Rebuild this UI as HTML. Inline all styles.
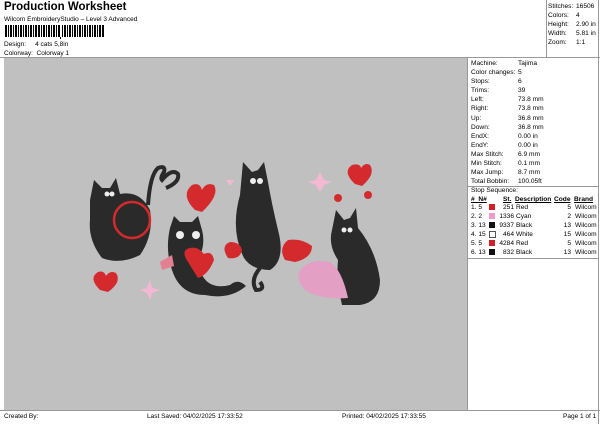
<!DOCTYPE html>
<html><head><style>
body{margin:0;width:600px;height:424px;background:#fff;font-family:"Liberation Sans",sans-serif;font-size:7px;color:#000;position:relative;overflow:hidden}
.a{position:absolute;white-space:nowrap}
.r{position:absolute;font-size:6.6px;line-height:9.1px;white-space:nowrap}
</style></head><body>
<div class="a" style="left:4px;top:1px;font-size:11.5px;font-weight:bold">Production Worksheet</div>
<div class="a" style="left:4px;top:16px;font-size:6.5px">Wilcom EmbroideryStudio – Level 3 Advanced</div>
<svg class="a" style="left:5px;top:25px" width="100" height="14">
<g fill="#000">
<rect x="0" y="0" width="2" height="12"/><rect x="3" y="0" width="1" height="12"/><rect x="5" y="0" width="2" height="12"/><rect x="8" y="0" width="1" height="12"/><rect x="10" y="0" width="2" height="12"/><rect x="13" y="0" width="1" height="12"/><rect x="15" y="0" width="2" height="12"/><rect x="18" y="0" width="1" height="12"/><rect x="20" y="0" width="2" height="12"/><rect x="23" y="0" width="1" height="12"/><rect x="25" y="0" width="2" height="12"/><rect x="28" y="0" width="1" height="12"/><rect x="30" y="0" width="2" height="12"/><rect x="33" y="0" width="2" height="12"/><rect x="36" y="0" width="1" height="12"/><rect x="38" y="0" width="2" height="12"/><rect x="41" y="0" width="1" height="12"/><rect x="43" y="0" width="2" height="12"/><rect x="46" y="0" width="1" height="12"/><rect x="48" y="0" width="2" height="12"/><rect x="51" y="0" width="1" height="12"/><rect x="53" y="0" width="2" height="12"/><rect x="57" y="0" width="1" height="12"/><rect x="59" y="0" width="2" height="12"/><rect x="62" y="0" width="1" height="12"/><rect x="64" y="0" width="2" height="12"/><rect x="67" y="0" width="1" height="12"/><rect x="69" y="0" width="2" height="12"/><rect x="72" y="0" width="1" height="12"/><rect x="74" y="0" width="2" height="12"/><rect x="77" y="0" width="1" height="12"/><rect x="79" y="0" width="2" height="12"/><rect x="82" y="0" width="1" height="12"/><rect x="84" y="0" width="2" height="12"/><rect x="87" y="0" width="1" height="12"/><rect x="89" y="0" width="2" height="12"/><rect x="92" y="0" width="1" height="12"/><rect x="94" y="0" width="2" height="12"/><rect x="97" y="0" width="2" height="12"/>
<rect x="55" y="12" width="1" height="2"/></g></svg>
<div class="a" style="left:4px;top:41px;font-size:6.5px">Design:&nbsp;&nbsp;&nbsp;&nbsp;&nbsp;4 cats 5,8in</div>
<div class="a" style="left:4px;top:50px;font-size:6.5px">Colorway:&nbsp; Colorway 1</div>
<div class="a" style="left:546px;top:0;width:1px;height:58px;background:#999"></div>
<div class="r" style="left:548px;top:2px">Stitches:<br>Colors:<br>Height:<br>Width:<br>Zoom:</div>
<div class="r" style="left:576px;top:2px">16506<br>4<br>2.90 in<br>5.81 in<br>1:1</div>
<div class="a" style="left:0;top:57px;width:600px;height:1px;background:#999"></div>
<div class="a" style="left:4px;top:58px;width:463px;height:352px;background:#c0c0c0"></div>
<div class="a" style="left:467px;top:58px;width:1px;height:352px;background:#999"></div>
<div class="a" style="left:0;top:410px;width:600px;height:1px;background:#999"></div>
<div class="a" style="left:598px;top:0;width:1px;height:424px;background:#999"></div>
<div class="r" style="left:471px;top:59px">Machine:<br>Color changes:<br>Stops:<br>Trims:<br>Left:<br>Right:<br>Up:<br>Down:<br>EndX:<br>EndY:<br>Max Stitch:<br>Min Stitch:<br>Max Jump:<br>Total Bobbin:</div>
<div class="r" style="left:518px;top:59px">Tajima<br>5<br>6<br>39<br>73.8 mm<br>73.8 mm<br>36.8 mm<br>36.8 mm<br>0.00 in<br>0.00 in<br>6.9 mm<br>0.1 mm<br>8.7 mm<br>100.05ft</div>
<div class="a" style="left:468px;top:186px;width:130px;height:1px;background:#999"></div>
<div class="r" style="left:471px;top:186px">Stop Sequence:</div>
<div class="r" style="left:471px;top:195px;font-weight:bold;text-decoration:underline">#&nbsp; N#</div>
<div class="r" style="left:503px;top:195px;font-weight:bold;text-decoration:underline">St.</div>
<div class="r" style="left:515px;top:195px;font-weight:bold;text-decoration:underline">Description</div>
<div class="r" style="left:554px;top:195px;font-weight:bold;text-decoration:underline">Code</div>
<div class="r" style="left:574px;top:195px;font-weight:bold;text-decoration:underline">Brand</div>
<div class="r" style="left:471px;top:203px">1. 5<br>2. 2<br>3. 13<br>4. 15<br>5. 5<br>6. 13</div>
<div class="a" style="left:489px;top:204px;width:6px;height:6px;background:#d21f25"></div>
<div class="a" style="left:489px;top:213px;width:6px;height:6px;background:#f09ac8"></div>
<div class="a" style="left:489px;top:222px;width:6px;height:6px;background:#111"></div>
<div class="a" style="left:489px;top:231px;width:5px;height:5px;border:0.5px solid #555;background:#fff"></div>
<div class="a" style="left:489px;top:240px;width:6px;height:6px;background:#d21f25"></div>
<div class="a" style="left:489px;top:249px;width:6px;height:6px;background:#111"></div>
<div class="r" style="left:496px;top:203px;width:18px;text-align:right">251<br>1336<br>9337<br>464<br>4284<br>832</div>
<div class="r" style="left:516px;top:203px">Red<br>Cyan<br>Black<br>White<br>Red<br>Black</div>
<div class="r" style="left:555px;top:203px;width:16px;text-align:right">5<br>2<br>13<br>15<br>5<br>13</div>
<div class="r" style="left:575px;top:203px">Wilcom<br>Wilcom<br>Wilcom<br>Wilcom<br>Wilcom<br>Wilcom</div>
<div class="a" style="left:468px;top:258px;width:130px;height:1px;background:#999"></div>
<div class="r" style="left:4px;top:412px;font-size:6.5px">Created By:</div>
<div class="r" style="left:147px;top:412px;font-size:6.5px">Last Saved: 04/02/2025 17:33:52</div>
<div class="r" style="left:342px;top:412px;font-size:6.5px">Printed: 04/02/2025 17:33:55</div>
<div class="r" style="left:563px;top:412px;font-size:6.5px">Page 1 of 1</div>
<svg class="a" style="left:80px;top:150px" width="310" height="160" viewBox="0 0 310 160">
<g fill="#2a2a2a">
<path d="M10 50 L14 30 L22 38 L30 38 L36 28 L40 44 Q60 40 70 60 Q74 85 60 105 Q40 115 22 108 Q8 90 10 70Z"/>
<path d="M68 55 Q70 25 78 18 Q86 15 84 22 Q80 28 82 30 Q92 18 98 24 Q100 32 86 38" fill="none" stroke="#2a2a2a" stroke-width="4"/>
<path d="M90 78 L94 66 L100 72 L112 72 L118 66 L122 80 Q126 95 118 110 L122 125 Q130 140 150 135 Q158 128 166 136 Q150 150 125 145 Q100 145 92 120 Q85 100 90 78Z"/>
<path d="M160 45 L163 12 L172 22 L178 20 L184 12 L188 32 Q192 55 198 80 Q206 110 190 120 Q172 120 164 108 Q150 80 160 45Z"/>
<path d="M180 118 Q170 130 176 140 Q186 140 180 132" fill="none" stroke="#2a2a2a" stroke-width="4"/>
<path d="M252 80 L256 60 L264 70 L270 68 L276 58 L278 78 Q296 100 300 130 Q300 152 280 155 L262 155 Q256 130 258 110 Q248 95 252 80Z"/>
</g>
<g fill="#d42a2e">
<path d="M115 60 Q100 45 112 35 Q120 32 122 40 Q126 32 134 35 Q140 45 122 62Z"/>
<path d="M20 140 Q8 128 18 122 Q24 120 26 126 Q30 120 36 123 Q42 132 28 142Z"/>
<path d="M275 34 Q262 22 272 15 Q280 13 281 18 Q285 12 290 15 Q296 24 282 36Z"/>
<path d="M108 112 Q100 100 110 98 Q118 96 124 104 Q132 100 134 110 Q128 125 118 128Z"/>
<path d="M148 108 Q140 96 150 92 Q160 92 162 100 Q160 110 148 108Z"/>
<path d="M205 110 Q198 98 208 90 Q222 88 232 96 Q232 108 215 112Z"/>
<circle cx="52" cy="70" r="18" fill="none" stroke="#d42a2e" stroke-width="2.5"/>
<circle cx="258" cy="48" r="4"/><circle cx="288" cy="45" r="4"/>
</g>
<path d="M220 120 Q230 108 250 112 Q262 120 268 148 Q240 150 225 140 Q215 130 220 120Z" fill="#e4a0c4"/>
<path d="M80 112 L92 105 L94 116 L82 120Z" fill="#e08090"/>
<g fill="#f2b8d4">
<path d="M236 30 L240 22 L244 30 L252 32 L244 35 L240 42 L236 35 L228 32Z"/>
<path d="M67 138 L70 130 L72 138 L80 140 L72 143 L70 150 L67 143 L60 140Z"/>
<path d="M146 30 L154 30 L150 36Z"/>
</g>
<g fill="#eee"><circle cx="27" cy="44" r="2.5"/><circle cx="32" cy="44" r="2.5"/><circle cx="100" cy="85" r="4"/><circle cx="116" cy="85" r="4"/><circle cx="173" cy="31" r="3"/><circle cx="180" cy="31" r="3"/><circle cx="264" cy="80" r="2.5"/><circle cx="270" cy="80" r="2.5"/></g>
</svg>
</body></html>
